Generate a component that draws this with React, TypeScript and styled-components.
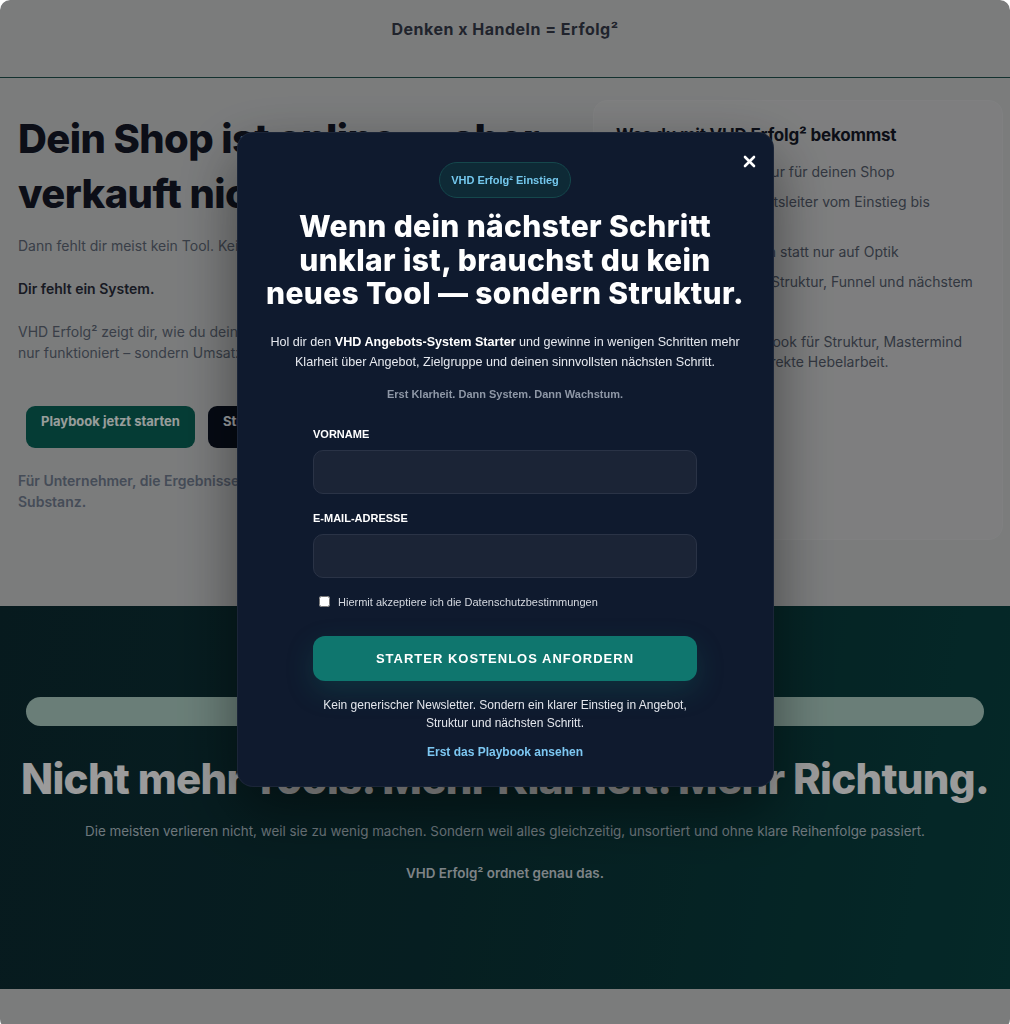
import styled, { createGlobalStyle } from "styled-components";

const GlobalStyle = createGlobalStyle`
  * { box-sizing: border-box; }
  html, body { margin: 0; padding: 0; background: #ffffff; }
  body { font-family: Inter, "Liberation Sans", Arial, sans-serif; }
`;

const display = `Inter, "Noto Sans", "Liberation Sans", sans-serif`;
const arial = `"Liberation Sans", Arial, sans-serif`;

const Page = styled.div`
  position: relative;
  min-height: 1024px;
  border-radius: 10px;
  overflow: hidden;
  background: #c0c2c3;
`;

const Header = styled.header`
  height: 78px;
  display: flex;
  justify-content: center;
  padding-top: 19px;
  border-bottom: 1px solid #1f4d4a;
`;

const Brand = styled.div`
  font-family: ${display};
  font-weight: 700;
  font-size: 16px;
  letter-spacing: 0.5px;
  color: #333846;
`;

const Hero = styled.section`
  display: grid;
  grid-template-columns: 1fr 410px;
  gap: 18px;
  padding: 22px 7px 66px 18px;
`;

const HeroCopy = styled.div`
  padding-top: 11px;
`;

const HeroTitle = styled.h1`
  margin: 0 0 14px;
  font-family: ${display};
  font-weight: 800;
  font-size: 40px;
  line-height: 55px;
  letter-spacing: -0.6px;
  color: #131725;
`;

const HeroText = styled.p<{ strong?: boolean }>`
  margin: 0 0 22px;
  font-size: 14px;
  line-height: 21px;
  font-weight: ${(p) => (p.strong ? 600 : 400)};
  color: ${(p) => (p.strong ? "#262a36" : "#5a6270")};
`;

const ButtonRow = styled.div`
  display: flex;
  gap: 13px;
  margin: 43px 0 22px 8px;
`;

const HeroButton = styled.a<{ dark?: boolean }>`
  display: inline-block;
  height: 42px;
  padding: 7px 15px 0;
  border-radius: 9px;
  font-size: 13px;
  font-weight: 700;
  line-height: 16px;
  color: ${(p) => (p.dark ? "#f1f5f9" : "#eef6f3")};
  background: ${(p) => (p.dark ? "#09101f" : "#095f54")};
`;

const HeroNote = styled.p`
  margin: 0;
  font-size: 14px;
  line-height: 21px;
  font-weight: 600;
  color: #6d7789;
`;

const Card = styled.aside`
  align-self: start;
  height: 440px;
  padding: 22px 22px;
  background: #c5c6c7;
  border: 1px solid #c8c9ca;
  border-radius: 14px;
`;

const CardTitle = styled.h3`
  margin: 0 0 15px;
  font-family: ${display};
  font-weight: 700;
  font-size: 17px;
  line-height: 24px;
  letter-spacing: -0.2px;
  color: #131725;
`;

const CardList = styled.ul`
  list-style: none;
  margin: 0 0 20px;
  padding: 0;
  display: flex;
  flex-direction: column;
  gap: 10px;
`;

const CardItem = styled.li`
  font-size: 14px;
  line-height: 20px;
  color: #4f5665;
`;

const CardText = styled.p`
  margin: 0;
  font-size: 14px;
  line-height: 20px;
  color: #4f5665;
`;

const Dark = styled.section`
  height: 383px;
  padding: 91px 18px 0;
  background: linear-gradient(100deg, #0b2a30 0%, #0a3034 45%, #08403f 100%);
  text-align: center;
`;

const Pill = styled.div`
  height: 29px;
  margin: 0 8px 27px;
  border-radius: 15px;
  background: #a6c6bc;
  font-size: 13px;
  font-weight: 600;
  line-height: 29px;
  color: #0b3a34;
`;

const DarkTitle = styled.h2`
  margin: 0 0 16px;
  font-family: ${display};
  font-weight: 800;
  font-size: 42px;
  line-height: 52px;
  letter-spacing: -0.7px;
  white-space: nowrap;
  color: #f2f2f2;
`;

const DarkText = styled.p<{ strong?: boolean }>`
  margin: 0 0 21px;
  font-size: 13.4px;
  line-height: 21px;
  font-weight: ${(p) => (p.strong ? 600 : 400)};
  color: ${(p) => (p.strong ? "#c5ced3" : "#acbbc3")};
`;

const Footer = styled.footer`
  height: 40px;
  background: #c0c2c3;
`;

const Overlay = styled.div`
  position: absolute;
  inset: 0;
  display: flex;
  justify-content: center;
  align-items: flex-start;
  padding-top: 132px;
  background: rgba(0, 0, 0, 0.36);
  backdrop-filter: blur(0.6px);
`;

const Modal = styled.div`
  position: relative;
  width: 537px;
  padding: 29px 24px 26px;
  background: #0f1a2e;
  border: 1px solid rgba(255, 255, 255, 0.05);
  border-radius: 16px;
  box-shadow: 0 24px 60px rgba(0, 0, 0, 0.45);
  text-align: center;
  font-family: ${arial};
`;

const Close = styled.button`
  position: absolute;
  top: 17px;
  right: 12px;
  width: 22px;
  height: 22px;
  padding: 0;
  border: 0;
  background: transparent;
  display: flex;
  align-items: center;
  justify-content: center;
`;

const Badge = styled.span`
  display: inline-block;
  height: 36px;
  padding: 0 11px;
  border-radius: 18px;
  background: #0e2a36;
  border: 1px solid #15474c;
  font-size: 11px;
  font-weight: 700;
  line-height: 34px;
  color: #74c8ee;
`;

const ModalTitle = styled.h2`
  margin: 12px 0 21px;
  font-family: ${display};
  font-weight: 800;
  font-size: 30px;
  line-height: 33.6px;
  letter-spacing: 0.35px;
  white-space: nowrap;
  color: #ffffff;
`;

const ModalText = styled.p`
  margin: 0 0 14px;
  font-size: 12.6px;
  line-height: 20px;
  white-space: nowrap;
  color: #e6e9ef;
  b { color: #ffffff; }
`;

const Tagline = styled.p`
  margin: 0 0 25px;
  font-size: 11px;
  line-height: 16px;
  font-weight: 700;
  color: #8e97a6;
`;

const Form = styled.form`
  width: 384px;
  margin: 0 auto;
  text-align: left;
`;

const Label = styled.label`
  display: block;
  margin-bottom: 9px;
  font-size: 11px;
  line-height: 14px;
  font-weight: 700;
  color: #ffffff;
`;

const Input = styled.input`
  display: block;
  width: 100%;
  height: 44px;
  margin-bottom: 17px;
  padding: 0 14px;
  border-radius: 10px;
  border: 1px solid #2a3346;
  background: #1b2436;
  color: #ffffff;
  outline: none;
`;

const Consent = styled.label`
  display: flex;
  align-items: center;
  gap: 8px;
  margin: 2px 0 27px 6px;
  font-size: 11px;
  line-height: 14px;
  color: #d5d9e0;
  input {
    width: 11px;
    height: 11px;
    margin: 0;
  }
`;

const Submit = styled.button`
  display: block;
  width: 100%;
  height: 45px;
  border: 0;
  border-radius: 12px;
  background: #0f766e;
  box-shadow: 0 10px 28px rgba(20, 130, 120, 0.22);
  font-family: ${arial};
  font-size: 13px;
  font-weight: 700;
  letter-spacing: 1px;
  color: #ffffff;
`;

const Fine = styled.p`
  margin: 15px 0 12px;
  font-size: 12px;
  line-height: 18px;
  color: #e3e6ec;
  text-align: center;
`;

const Link = styled.a`
  display: block;
  font-size: 12px;
  line-height: 16px;
  font-weight: 700;
  color: #7cc7f2;
  text-align: center;
`;

export default function App() {
  return (
    <>
      <GlobalStyle />
      <Page>
        <Header>
          <Brand>Denken x Handeln = Erfolg²</Brand>
        </Header>
        <Hero>
          <HeroCopy>
            <HeroTitle>
              Dein Shop ist online — aber
              <br />
              verkauft nicht.
            </HeroTitle>
            <HeroText>Dann fehlt dir meist kein Tool. Kein Design. Kein weiteres Plugin.</HeroText>
            <HeroText strong>Dir fehlt ein System.</HeroText>
            <HeroText>
              VHD Erfolg² zeigt dir, wie du deinen Shop so aufbaust, dass er nicht
              <br />
              nur funktioniert – sondern Umsatz bringt.
            </HeroText>
            <ButtonRow>
              <HeroButton>Playbook jetzt starten</HeroButton>
              <HeroButton dark>Strategiegespräch buchen</HeroButton>
            </ButtonRow>
            <HeroNote>
              Für Unternehmer, die Ergebnisse wollen – nicht noch mehr Theorie ohne
              <br />
              Substanz.
            </HeroNote>
          </HeroCopy>
          <Card>
            <CardTitle>Was du mit VHD Erfolg² bekommst</CardTitle>
            <CardList>
              <CardItem>✓ Klare Angebotsstruktur für deinen Shop</CardItem>
              <CardItem>✓ Eine saubere Angebotsleiter vom Einstieg bis Premium-Leistung</CardItem>
              <CardItem>✓ Fokus auf Conversion statt nur auf Optik</CardItem>
              <CardItem>✓ Klarheit zu Angebot, Struktur, Funnel und nächstem Schritt</CardItem>
            </CardList>
            <CardText>
              Wähle dein Level: Playbook für Struktur, Mastermind
              <br />
              für Austausch, 1:1 für direkte Hebelarbeit.
            </CardText>
          </Card>
        </Hero>
        <Dark>
          <Pill>Das Problem ist nicht fehlender Einsatz</Pill>
          <DarkTitle>Nicht mehr Tools. Mehr Klarheit. Mehr Richtung.</DarkTitle>
          <DarkText>
            Die meisten verlieren nicht, weil sie zu wenig machen. Sondern weil alles gleichzeitig,
            unsortiert und ohne klare Reihenfolge passiert.
          </DarkText>
          <DarkText strong>VHD Erfolg² ordnet genau das.</DarkText>
        </Dark>
        <Footer />

        <Overlay>
          <Modal>
            <Close aria-label="Schließen">
              <svg width="13" height="13" viewBox="0 0 13 13">
                <path d="M2 2 L11 11 M11 2 L2 11" stroke="#ffffff" strokeWidth="2.6" strokeLinecap="round" />
              </svg>
            </Close>
            <Badge>VHD Erfolg² Einstieg</Badge>
            <ModalTitle>
              Wenn dein nächster Schritt
              <br />
              unklar ist, brauchst du kein
              <br />
              neues Tool — sondern Struktur.
            </ModalTitle>
            <ModalText>
              Hol dir den <b>VHD Angebots-System Starter</b> und gewinne in wenigen Schritten mehr
              <br />
              Klarheit über Angebot, Zielgruppe und deinen sinnvollsten nächsten Schritt.
            </ModalText>
            <Tagline>Erst Klarheit. Dann System. Dann Wachstum.</Tagline>
            <Form onSubmit={(e) => e.preventDefault()}>
              <Label htmlFor="vorname">VORNAME</Label>
              <Input id="vorname" type="text" />
              <Label htmlFor="email">E-MAIL-ADRESSE</Label>
              <Input id="email" type="email" />
              <Consent>
                <input type="checkbox" />
                Hiermit akzeptiere ich die Datenschutzbestimmungen
              </Consent>
              <Submit type="submit">STARTER KOSTENLOS ANFORDERN</Submit>
              <Fine>
                Kein generischer Newsletter. Sondern ein klarer Einstieg in Angebot,
                <br />
                Struktur und nächsten Schritt.
              </Fine>
              <Link>Erst das Playbook ansehen</Link>
            </Form>
          </Modal>
        </Overlay>
      </Page>
    </>
  );
}
